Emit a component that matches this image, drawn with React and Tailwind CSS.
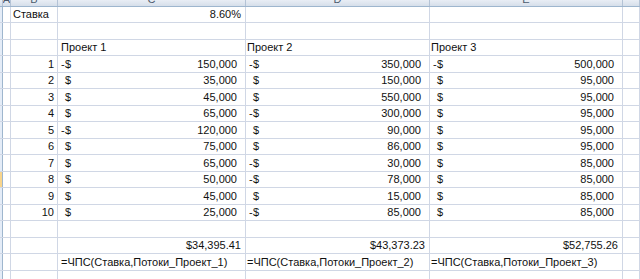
import React from "react";

const rows = [
  [1, -150000, -350000, -500000],
  [2, 35000, 150000, 95000],
  [3, 45000, 550000, 95000],
  [4, 65000, -300000, 95000],
  [5, -120000, 90000, 95000],
  [6, 75000, 86000, 95000],
  [7, 65000, -30000, 85000],
  [8, 50000, -78000, 85000],
  [9, 45000, 15000, 85000],
  [10, 25000, -85000, 85000],
];

const fmt = (n) => Math.abs(n).toLocaleString("en-US");

function Cell({ w, className = "", children }) {
  return (
    <div
      className={`${w} h-full shrink-0 border-r border-[#d0d7e5] flex items-end pb-[1px] overflow-visible whitespace-nowrap ${className}`}
    >
      {children}
    </div>
  );
}

function Money({ w, value }) {
  return (
    <Cell w={w} className="pl-[3px] pr-[8px] justify-between">
      <span className="flex">
        <span className="w-[4px]">{value < 0 ? "-" : ""}</span>
        <span>$</span>
      </span>
      <span>{fmt(value)}</span>
    </Cell>
  );
}

function Row({ h, hl, children }) {
  return (
    <div className={`flex ${h} border-b border-[#d0d7e5]`}>
      <div
        className={`w-[3px] h-full shrink-0 border-r border-[#9eb6ce] ${
          hl ? "bg-[#f9d58c]" : "bg-[#e4ecf7]"
        }`}
      />
      {children}
    </div>
  );
}

function Cols({ b, c, d, e, cCls = "", dCls = "", eCls = "", bCls = "" }) {
  return (
    <>
      <Cell w="w-[8px]" />
      <Cell w="w-[47px]" className={bCls}>{b}</Cell>
      <Cell w="w-[188px]" className={cCls}>{c}</Cell>
      <Cell w="w-[184px]" className={dCls}>{d}</Cell>
      <Cell w="w-[193px]" className={eCls}>{e}</Cell>
      <Cell w="w-[17px]" />
    </>
  );
}

const heights = ["h-[16px]", "h-[17px]"];

export default function App() {
  let i = 0;
  const nextH = () => heights[i++ % 2];

  return (
    <div
      className="w-[640px] h-[279px] overflow-hidden bg-white text-[11px] leading-[13px] text-[#111]"
      style={{ fontFamily: '"Liberation Sans", Arial, sans-serif' }}
    >
      {/* column header strip, mostly scrolled off */}
      <div className="flex h-[7px] bg-gradient-to-b from-[#e9eef5] to-[#d6dfea] border-b border-[#9eb6ce] text-[#4c5a6d]">
        {[
          ["w-[3px]", ""],
          ["w-[8px]", "A"],
          ["w-[47px]", "B"],
          ["w-[188px]", "C"],
          ["w-[184px]", "D"],
          ["w-[193px]", "E"],
          ["w-[17px]", ""],
        ].map(([w, l], k) => (
          <div
            key={k}
            className={`${w} h-full shrink-0 border-r border-[#b4c3d6] overflow-hidden flex justify-center`}
          >
            <span className="leading-[11px] -mt-[6px]">{l}</span>
          </div>
        ))}
      </div>

      <Row h={nextH()}>
        <Cols b="Ставка" bCls="pl-[2px]" c="8.60%" cCls="justify-end pr-[4px]" />
      </Row>
      <Row h={nextH()}>
        <Cols />
      </Row>
      <Row h={nextH()}>
        <Cols
          c="Проект 1"
          d="Проект 2"
          e="Проект 3"
          cCls="pl-[3px]"
          dCls="pl-[1px]"
          eCls="pl-[1px]"
        />
      </Row>
      {rows.map(([n, a, b, c]) => (
        <Row key={n} h={nextH()} hl={n === 8}>
          <Cell w="w-[8px]" />
          <Cell w="w-[47px]" className="justify-end pr-[3px]">
            {n}
          </Cell>
          <Money w="w-[188px]" value={a} />
          <Money w="w-[184px]" value={b} />
          <Money w="w-[193px]" value={c} />
          <Cell w="w-[17px]" />
        </Row>
      ))}
      <Row h={nextH()}>
        <Cols />
      </Row>
      <Row h={nextH()}>
        <Cols
          c="$34,395.41"
          d="$43,373.23"
          e="$52,755.26"
          cCls="justify-end pr-[4px]"
          dCls="justify-end pr-[4px]"
          eCls="justify-end pr-[4px]"
        />
      </Row>
      <Row h={nextH()}>
        <Cols
          c="=ЧПС(Ставка,Потоки_Проект_1)"
          d="=ЧПС(Ставка,Потоки_Проект_2)"
          e="=ЧПС(Ставка,Потоки_Проект_3)"
          cCls="pl-[3px]"
          dCls="pl-[1px]"
          eCls="pl-[1px]"
        />
      </Row>
      <Row h="h-[16px]">
        <Cols />
      </Row>
    </div>
  );
}
